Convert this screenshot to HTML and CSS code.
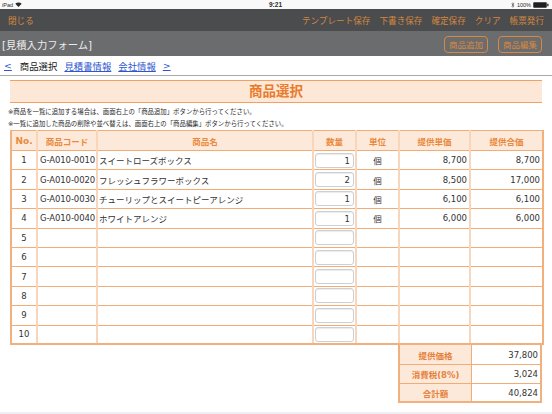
FILE: index.html
```html
<!DOCTYPE html>
<html lang="ja">
<head>
<meta charset="utf-8">
<title>見積入力フォーム</title>
<link rel="stylesheet" href="styles.css">
</head>
<body>
<div class="status">
  <div class="status-left">
    <span>iPad</span>
    <svg class="wifi" width="7" height="5" viewBox="0 0 14 10"><path d="M7 10 L0.6 3.4 A9.2 9.2 0 0 1 13.4 3.4 Z" fill="#2b2b2b"/></svg>
  </div>
  <div class="status-time">9:21</div>
  <div class="status-right">
    <svg width="4" height="6" viewBox="0 0 8 12"><path d="M1 3.2 L6.2 8.2 L3.6 10.6 V1.4 L6.2 3.8 L1 8.8" fill="none" stroke="#555" stroke-width="1.2"/></svg>
    <span>100%</span>
    <svg width="16" height="6" viewBox="0 0 32 12"><rect x="0.5" y="0.5" width="27" height="11" rx="1.5" fill="#1f1f1f"/><rect x="28.5" y="3.5" width="2.5" height="5" fill="#1f1f1f"/></svg>
  </div>
</div>

<header class="toolbar">
  <a class="tool-link">閉じる</a>
  <nav class="tool-menu">
    <a class="tool-link">テンプレート保存</a>
    <a class="tool-link">下書き保存</a>
    <a class="tool-link">確定保存</a>
    <a class="tool-link">クリア</a>
    <a class="tool-link">帳票発行</a>
  </nav>
</header>

<div class="formbar">
  <span class="form-title">[見積入力フォーム]</span>
  <div class="form-actions">
    <button class="pill">商品追加</button>
    <button class="pill">商品編集</button>
  </div>
</div>

<nav class="crumbs">
  <a class="crumb-link" href="#">&lt;</a>
  <span class="crumb-current">商品選択</span>
  <a class="crumb-link" href="#">見積書情報</a>
  <a class="crumb-link" href="#">会社情報</a>
  <a class="crumb-link" href="#">&gt;</a>
</nav>

<main class="content">
  <h2 class="section-title">商品選択</h2>
  <p class="notes">※商品を一覧に追加する場合は、画面右上の「商品追加」ボタンから行ってください。<br>※一覧に追加した商品の削除や並べ替えは、画面右上の「商品編集」ボタンから行ってください。</p>

  <table class="items">
    <colgroup>
      <col class="c-no"><col class="c-code"><col class="c-name"><col class="c-qty"><col class="c-unit"><col class="c-price"><col class="c-total">
    </colgroup>
    <thead>
      <tr><th>No.</th><th>商品コード</th><th>商品名</th><th>数量</th><th>単位</th><th>提供単価</th><th>提供合価</th></tr>
    </thead>
    <tbody>
      <tr><td class="num-c">1</td><td class="code">G-A010-0010</td><td class="name">スイートローズボックス</td><td class="qty"><span class="qty-box">1</span></td><td class="unit">個</td><td class="money">8,700</td><td class="money">8,700</td></tr>
      <tr><td class="num-c">2</td><td class="code">G-A010-0020</td><td class="name">フレッシュフラワーボックス</td><td class="qty"><span class="qty-box">2</span></td><td class="unit">個</td><td class="money">8,500</td><td class="money">17,000</td></tr>
      <tr><td class="num-c">3</td><td class="code">G-A010-0030</td><td class="name">チューリップとスイートピーアレンジ</td><td class="qty"><span class="qty-box">1</span></td><td class="unit">個</td><td class="money">6,100</td><td class="money">6,100</td></tr>
      <tr><td class="num-c">4</td><td class="code">G-A010-0040</td><td class="name">ホワイトアレンジ</td><td class="qty"><span class="qty-box">1</span></td><td class="unit">個</td><td class="money">6,000</td><td class="money">6,000</td></tr>
      <tr><td class="num-c">5</td><td></td><td></td><td class="qty"><span class="qty-box"></span></td><td></td><td></td><td></td></tr>
      <tr><td class="num-c">6</td><td></td><td></td><td class="qty"><span class="qty-box"></span></td><td></td><td></td><td></td></tr>
      <tr><td class="num-c">7</td><td></td><td></td><td class="qty"><span class="qty-box"></span></td><td></td><td></td><td></td></tr>
      <tr><td class="num-c">8</td><td></td><td></td><td class="qty"><span class="qty-box"></span></td><td></td><td></td><td></td></tr>
      <tr><td class="num-c">9</td><td></td><td></td><td class="qty"><span class="qty-box"></span></td><td></td><td></td><td></td></tr>
      <tr><td class="num-c">10</td><td></td><td></td><td class="qty"><span class="qty-box"></span></td><td></td><td></td><td></td></tr>
    </tbody>
  </table>

  <table class="totals">
    <tr><th>提供価格</th><td>37,800</td></tr>
    <tr><th>消費税(8%)</th><td>3,024</td></tr>
    <tr><th>合計額</th><td>40,824</td></tr>
  </table>
</main>

<div class="home-strip"></div>
</body>
</html>
```

FILE: styles.css
```css
html, body {
  margin: 0;
  padding: 0;
}

body {
  height: 414px;
  overflow: hidden;
  display: flex;
  flex-direction: column;
  background: #ffffff;
  color: #333333;
  font-family: "DejaVu Sans", "Noto Sans CJK JP", sans-serif;
  font-size: 8.5px;
}

/* status bar */
.status {
  height: 9px;
  flex: none;
  display: grid;
  grid-template-columns: 1fr auto 1fr;
  align-items: center;
  padding: 0 3px 0 2px;
  background: #f9f9f9;
  font-size: 5.5px;
  color: #2b2b2b;
  font-family: "Liberation Sans", "Noto Sans CJK JP", sans-serif;
}
.status-left {
  display: flex;
  align-items: center;
  gap: 2px;
}
.status-time {
  font-weight: bold;
  font-size: 6.5px;
}
.status-right {
  display: flex;
  align-items: center;
  justify-content: flex-end;
  gap: 2px;
}

/* dark toolbar */
.toolbar {
  height: 22px;
  flex: none;
  display: flex;
  align-items: center;
  justify-content: space-between;
  padding: 0 8px;
  background: #4b4c4e;
}
.tool-link {
  color: #d4873f;
  font-size: 8.6px;
}
.tool-menu {
  display: flex;
  gap: 9px;
}

/* form bar */
.formbar {
  height: 25px;
  flex: none;
  display: flex;
  align-items: center;
  justify-content: space-between;
  padding: 1px 10px 0 2px;
  box-sizing: border-box;
  background: #6a6c6e;
}
.form-title {
  color: #ececec;
  font-size: 10.3px;
}
.form-actions {
  display: flex;
  gap: 10px;
}
.pill {
  width: 44px;
  height: 17px;
  padding: 0;
  border: 1.5px solid #d8893f;
  border-radius: 4px;
  background: transparent;
  color: #d8893f;
  font-family: "DejaVu Sans", "Noto Sans CJK JP", sans-serif;
  font-size: 8.5px;
}

/* breadcrumb navigation */
.crumbs {
  height: 19px;
  flex: none;
  display: flex;
  align-items: center;
  gap: 7px;
  padding: 0 0 0 4px;
  border-bottom: 1px solid #a9a9a9;
  font-size: 9.4px;
}
.crumb-link {
  color: #2f56cf;
  text-decoration: underline;
}
.crumb-current {
  color: #222;
  margin-left: 1px;
}

/* main content */
.content {
  flex: 1;
  padding: 4px 10px 0;
}
.section-title {
  margin: 0;
  height: 21px;
  line-height: 21px;
  text-align: center;
  font-size: 13.5px;
  font-weight: bold;
  color: #e97b2d;
  background: #fde8d7;
  border-top: 1px solid #f1a263;
  border-bottom: 1px solid #f1a263;
}
.notes {
  margin: 0;
  padding: 3px 0 0 0;
  margin-left: -2px;
  height: 27px;
  box-sizing: border-box;
  line-height: 12px;
  font-size: 6.4px;
  color: #2a2a2a;
}

/* items table */
.items {
  width: 532px;
  border-collapse: collapse;
  table-layout: fixed;
}
.c-no { width: 26px; }
.c-code { width: 60px; }
.c-name { width: 216px; }
.c-qty { width: 43px; }
.c-unit { width: 43px; }
.c-price { width: 71px; }
.c-total { width: 73px; }

.items th,
.items td {
  padding: 0;
  border-top: 1px solid #f2ac76;
  border-bottom: 1px solid #f2ac76;
  border-left: 2px solid #f9d5ba;
  border-right: 2px solid #f9d5ba;
  white-space: nowrap;
  overflow: hidden;
}
.items th:first-child,
.items td:first-child {
  border-left: 2px solid #f2b07c;
}
.items th:last-child,
.items td:last-child {
  border-right: 2px solid #f2b07c;
}
.items tbody tr:last-child td {
  border-bottom: 2px solid #f2b07c;
}
.items thead tr {
  height: 20px;
}
.items th {
  background: #fde9da;
  color: #ea893d;
  font-weight: bold;
  font-size: 8.5px;
  text-align: center;
}
.items th:first-child {
  font-size: 9px;
}
.items tbody tr {
  height: 19.4px;
}
.num-c {
  text-align: center;
}
.code {
  padding-left: 2px !important;
  letter-spacing: -0.1px;
}
.name {
  padding-left: 1px !important;
}
.qty {
  padding: 0 1px 0 1px !important;
}
.qty-box {
  display: block;
  height: 15px;
  line-height: 15px;
  box-sizing: border-box;
  border: 1px solid #cfcfcf;
  border-radius: 3px;
  box-shadow: inset 0 1px 1px rgba(0, 0, 0, 0.08);
  background: #fff;
  text-align: right;
  padding-right: 3px;
}
.unit {
  text-align: center;
}
.money {
  text-align: right;
  padding-right: 2px !important;
}

/* totals */
.totals {
  width: 144px;
  margin-left: auto;
  border-collapse: collapse;
  table-layout: fixed;
}
.totals tr {
  height: 19px;
}
.totals th,
.totals td {
  padding: 0;
  border: 1px solid #f2ac76;
  border-top: none;
}
.totals tr + tr th,
.totals tr + tr td {
  border-top: 1px solid #f2ac76;
}
.totals th {
  width: 71px;
  background: #fde9da;
  color: #e5823a;
  font-weight: bold;
  font-size: 8.5px;
  text-align: center;
  border-left: 2px solid #f2b07c;
}
.totals td {
  text-align: right;
  padding-right: 2px;
  border-right: 2px solid #f2b07c;
}
.totals tr:last-child th,
.totals tr:last-child td {
  border-bottom: 2px solid #f2b07c;
}

.home-strip {
  height: 2px;
  flex: none;
  background: #efeff4;
}
```
